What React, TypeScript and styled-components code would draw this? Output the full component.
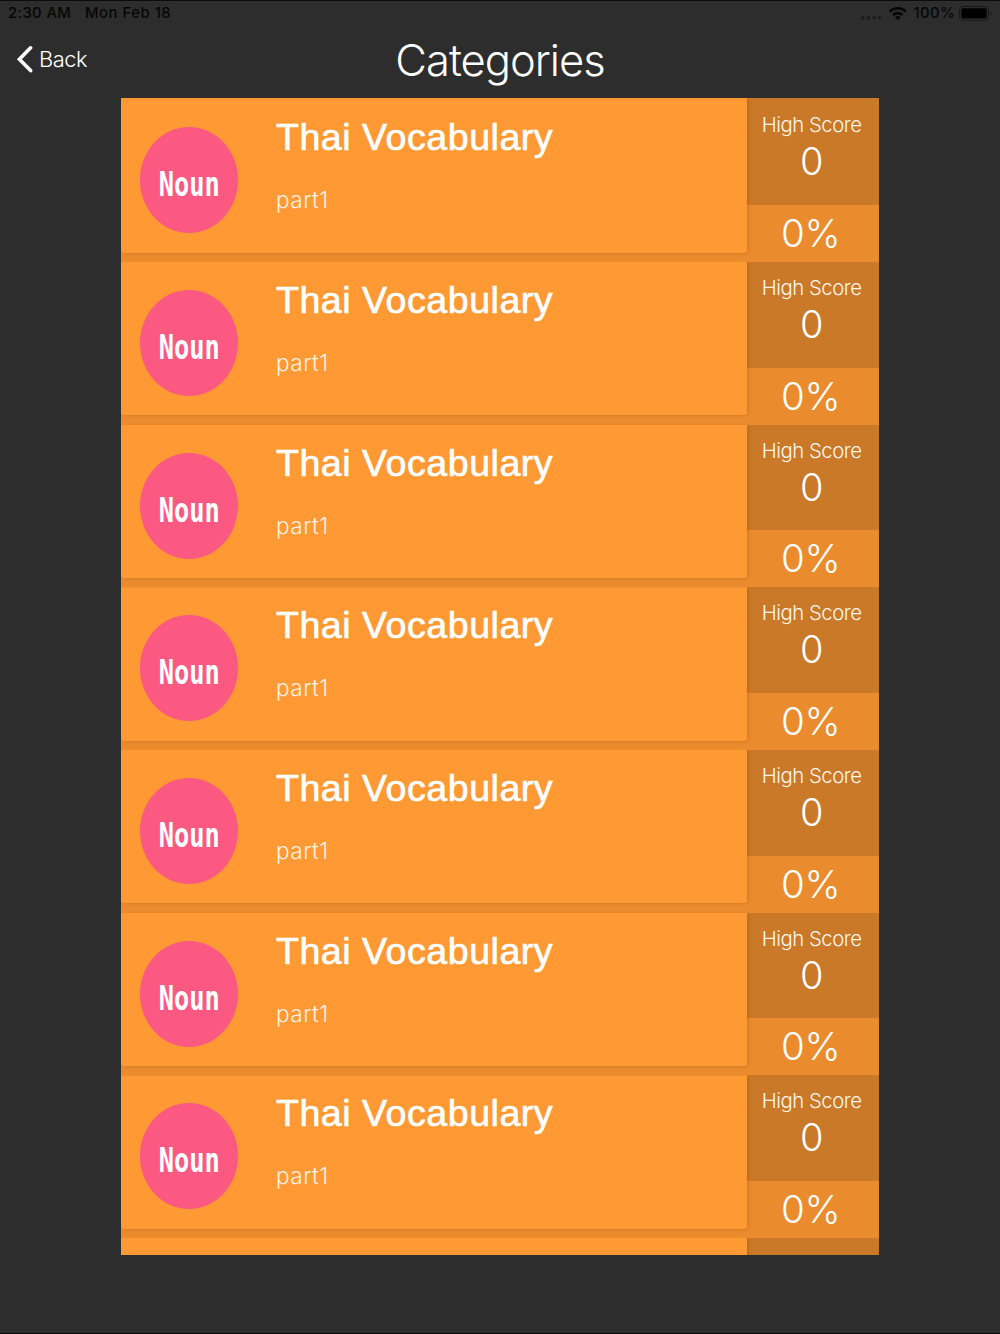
import React from 'react';
import styled, { createGlobalStyle } from 'styled-components';

const PAGE = '#2d2d2d';
const CARD = '#ff9933';
const SIDE = '#ea8c2e';
const SCORE = '#ca7928';

const GlobalStyle = createGlobalStyle`
  * { box-sizing: border-box; }
  body { margin: 0; background: ${PAGE}; }
`;

const Screen = styled.main`
  display: flex;
  flex-direction: column;
  height: 1334px;
  overflow: hidden;
  background: ${PAGE};
  border-top: 1px solid #0c0c0c;
  border-bottom: 1px solid #0c0c0c;
  color: #fff;
  font-family: 'Liberation Sans', Arial, sans-serif;
  white-space: nowrap;
`;

const StatusBar = styled.div`
  display: flex;
  align-items: center;
  height: 25px;
  padding: 0 7px 1px 8px;
  color: #060606;
  font: 500 14.8px/24px Inter, sans-serif;
`;

const Clock = styled.span<{ $width: number; $tracking: number }>`
  width: ${(p) => p.$width}px;
  letter-spacing: ${(p) => p.$tracking}px;
`;

const Indicators = styled.div`
  display: flex;
  align-items: center;
  gap: 2px;
  margin-left: auto;
  margin-right: 2px;
  letter-spacing: 0.4px;
`;

const Header = styled.header`
  display: grid;
  grid-template-columns: 150px 1fr 150px;
  height: 72px;
`;

const BackButton = styled.button`
  display: flex;
  align-items: flex-start;
  gap: 6px;
  padding: 18px 0 0 16px;
  border: 0;
  background: none;
  color: #fff;
  font: 300 21.8px/30px Inter, sans-serif;
  letter-spacing: -0.45px;
`;

const Light = styled.span<{ $size: number; $tracking: number; $weight?: number }>`
  display: block;
  font-family: Inter, sans-serif;
  font-weight: ${(p) => p.$weight ?? 300};
  font-size: ${(p) => p.$size}px;
  letter-spacing: ${(p) => p.$tracking}px;
`;

const Title = styled.h1`
  margin: 0;
  text-align: center;
  font-weight: 400;
  line-height: 69px;
`;

const List = styled.section`
  width: 758px;
  height: 1157px;
  margin: 0 auto;
  overflow: hidden;
  background: linear-gradient(to right, ${CARD} 626px, ${SCORE} 626px);
  padding-top: 1.3px;
`;

const Row = styled.article`
  display: grid;
  grid-template-columns: 626.3px 1fr;
  height: 162.7px;
  background: ${SIDE};
`;

const Card = styled.div`
  z-index: 1;
  display: grid;
  grid-template-columns: 155px 1fr;
  height: 153.3px;
  border-radius: 0 0 3px 3px;
  background: ${CARD};
  box-shadow: 1px 0 4px rgba(80, 40, 0, 0.2);
  clip-path: inset(0 -6px -4px 0);
`;

const Badge = styled.div`
  display: flex;
  align-items: center;
  justify-content: center;
  width: 98px;
  height: 106px;
  margin: 28px 0 0 19px;
  border-radius: 50%;
  background: #fb5882;
`;

const BadgeText = styled.span`
  font: 700 33px/40px 'DejaVu Sans Mono', monospace;
  transform: translate(0.5px, 4.5px) scaleX(0.77);
`;

const Copy = styled.div`
  display: flex;
  flex-direction: column;
  padding-top: 16px;
`;

const Name = styled.h2`
  margin: 0;
  font-size: 37.5px;
  font-weight: 400;
  line-height: 44px;
  letter-spacing: 0.55px;
  -webkit-text-stroke: 0.7px #fff;
`;

const Part = styled.div`
  margin-top: 28px;
  line-height: 26px;
  color: #fff2e2;
`;

const Stats = styled.div`
  display: grid;
  grid-template-rows: 105.6px 1fr;
  text-align: center;
`;

const HighScore = styled.div`
  padding: 13px 3px 0 0;
  background: ${SCORE};
  line-height: 26px;
  color: #fff6ec;
`;

const ScoreValue = styled.div`
  line-height: 47px;
  color: #fff;
`;

const Percent = styled.div`
  padding-right: 5px;
  line-height: 57px;
`;

const categories = Array.from({ length: 7 }, (_, id) => ({
  id,
  name: 'Thai Vocabulary',
  kind: 'Noun',
  part: 'part1',
  score: 0,
  progress: 0,
}));

export default function App() {
  return (
    <Screen>
      <GlobalStyle />
      <StatusBar>
        <Clock $width={77} $tracking={0.4}>2:30 AM</Clock>
        <Clock $width={100} $tracking={0.55}>Mon Feb 18</Clock>
        <Indicators>
          <svg width="53" height="24" viewBox="0 0 53 24">
            <g fill="#1c1c1c">
              {[3, 9, 14.6, 20.2].map((x) => (
                <circle key={x} cx={x + 1.5} cy="16.8" r="1.8" />
              ))}
            </g>
            <g fill="none" stroke="#060606" strokeWidth="2.6">
              <path d="M31.7 10.6a11.5 11.5 0 0 1 16.2 0" />
              <path d="M35 14a7 7 0 0 1 9.6 0" />
            </g>
            <path d="M39.8 19.2l-3-2.9a4.4 4.4 0 0 1 6 0z" fill="#060606" />
          </svg>
          <span>100%</span>
        </Indicators>
        <svg width="36" height="24" viewBox="0 0 36 24">
          <rect x="2.5" y="5.5" width="29" height="13.8" rx="3.6" fill="none" stroke="#181818" />
          <rect x="4.3" y="7.2" width="25.4" height="10.4" rx="2" fill="#000" />
          <path d="M33.2 10.2q2.6 2.2 0 4.4z" fill="#181818" />
        </svg>
      </StatusBar>
      <Header>
        <BackButton>
          <svg width="17" height="30" viewBox="0 0 17 30" fill="none" stroke="#fff" strokeWidth="3.6" strokeLinecap="round">
            <path d="M14.6 3.8L3.4 15.2L14.6 26.6" />
          </svg>
          Back
        </BackButton>
        <Title>
          <Light $size={43.5} $tracking={-1} $weight={260}>Categories</Light>
        </Title>
      </Header>
      <List>
        {categories.map((c) => (
          <Row key={c.id}>
            <Card>
              <Badge>
                <BadgeText>{c.kind}</BadgeText>
              </Badge>
              <Copy>
                <Name>{c.name}</Name>
                <Part>
                  <Light $size={22.5} $tracking={0.5} $weight={270}>{c.part}</Light>
                </Part>
              </Copy>
            </Card>
            <Stats>
              <HighScore>
                <Light $size={20.3} $tracking={-0.45} $weight={270}>High Score</Light>
                <ScoreValue>
                  <Light $size={38} $tracking={0} $weight={260}>{c.score}</Light>
                </ScoreValue>
              </HighScore>
              <Percent>
                <Light $size={38.5} $tracking={-0.3} $weight={260}>{c.progress}%</Light>
              </Percent>
            </Stats>
          </Row>
        ))}
        <Row>
          <Card />
          <Stats>
            <HighScore />
          </Stats>
        </Row>
      </List>
    </Screen>
  );
}
